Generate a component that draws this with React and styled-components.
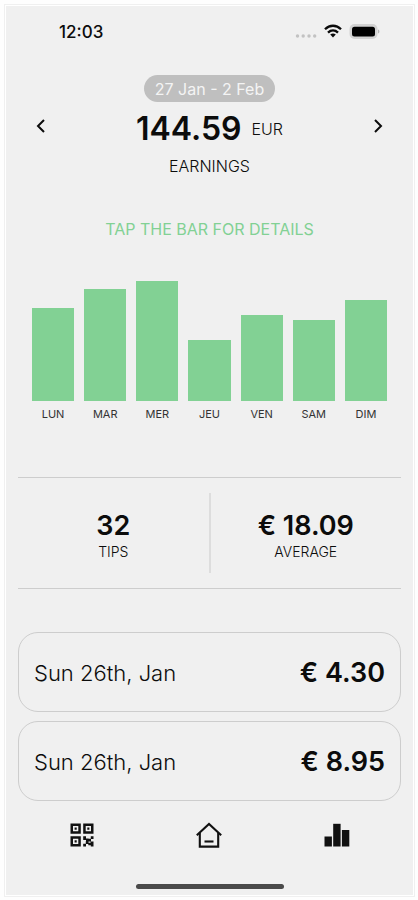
import { React, useState } from "react";
import styled, { createGlobalStyle } from "styled-components";

const days = [
    { name: "LUN", value: 93 },
    { name: "MAR", value: 112 },
    { name: "MER", value: 120 },
    { name: "JEU", value: 61 },
    { name: "VEN", value: 86 },
    { name: "SAM", value: 81 },
    { name: "DIM", value: 101 },
];

const tips = [
    { id: 1, date: "Sun 26th, Jan", value: "€ 4.30" },
    { id: 2, date: "Sun 26th, Jan", value: "€ 8.95" },
];

export default function App() {

    const [selected, setSelected] = useState(null);
    const max = Math.max(...days.map((d) => d.value));

    return (
        <>
            <GlobalStyle />
            <Frame>
                <Screen>
                    <StatusBar>
                        <time>12:03</time>
                        <StatusIcons />
                    </StatusBar>
                    <Header>
                        <ArrowButton aria-label="Previous week">
                            <svg width="24" height="24" viewBox="0 0 24 24"><path d="M15 5L9 11L15 17" /></svg>
                        </ArrowButton>
                        <Summary>
                            <Period>27 Jan - 2 Feb</Period>
                            <Total><strong>144.59</strong><span>EUR</span></Total>
                            <Caption>EARNINGS</Caption>
                        </Summary>
                        <ArrowButton aria-label="Next week">
                            <svg width="24" height="24" viewBox="0 0 24 24"><path d="M9 5L15 11L9 17" /></svg>
                        </ArrowButton>
                    </Header>
                    <Hint>TAP THE BAR FOR DETAILS</Hint>
                    <Chart>
                        {days.map((d) => (
                            <Day key={d.name} aria-pressed={selected === d.name} onClick={() => setSelected(d.name)}>
                                <Track><Bar style={{ height: `${(d.value / max) * 100}%` }} /></Track>
                                <span>{d.name}</span>
                            </Day>
                        ))}
                    </Chart>
                    <Stats>
                        <Stat>
                            <strong>32</strong>
                            <span>TIPS</span>
                        </Stat>
                        <Stat>
                            <strong>€ 18.09</strong>
                            <span>AVERAGE</span>
                        </Stat>
                    </Stats>
                    <Tips>
                        {tips.map((t) => (
                            <Tip key={t.id}>
                                <p>{t.date}</p>
                                <strong>{t.value}</strong>
                            </Tip>
                        ))}
                    </Tips>
                    <Nav>
                        <a href="#qr" aria-label="QR code"><QrIcon /></a>
                        <a href="#home" aria-label="Home"><HomeIcon /></a>
                        <a href="#stats" aria-label="Statistics"><StatsIcon /></a>
                    </Nav>
                    <HomeIndicator />
                </Screen>
            </Frame>
        </>
    )
}

function StatusIcons() {
    return (
        <svg width="85" height="18" viewBox="0 0 85 18">
            <g fill="#C2C2C2">
                <circle cx="2.5" cy="13" r="1.7" />
                <circle cx="8.2" cy="13" r="1.7" />
                <circle cx="14" cy="13" r="1.7" />
                <circle cx="19.7" cy="13" r="1.7" />
            </g>
            <g fill="none" stroke="#0A0A0A" strokeWidth="2.3">
                <path d="M30 6.2C34.6 1.6 41.4 1.6 46 6.2" />
                <path d="M33 9.6C36 6.7 40 6.7 43 9.6" />
            </g>
            <path d="M35.2 11.6C37 10.1 39 10.1 40.8 11.6L38 14.6Z" fill="#0A0A0A" />
            <rect x="54.5" y="1" width="28" height="15" rx="5" fill="#D2D2D2" />
            <rect x="57" y="3.8" width="23" height="9.6" rx="2.5" fill="#000000" />
            <path d="M83.2 6.5C84.8 7.1 84.8 9.9 83.2 10.5Z" fill="#A8A8A8" />
        </svg>
    )
}

function QrIcon() {
    return (
        <svg width="24" height="24" viewBox="0 0 24 24" fill="#111111">
            <path fillRule="evenodd" d="M0.5 0.5H10.8V10.8H0.5ZM3 3V8.3H8.3V3ZM4.6 4.6H6.7V6.7H4.6Z" />
            <path fillRule="evenodd" d="M13.2 0.5H23.5V10.8H13.2ZM15.7 3V8.3H21V3ZM17.3 4.6H19.4V6.7H17.3Z" />
            <path fillRule="evenodd" d="M0.5 13.2H10.8V23.5H0.5ZM3 15.7V21H8.3V15.7ZM4.6 17.3H6.7V19.4H4.6Z" />
            <path d="M13.2 13.2H16V15.5H18.6V18.3H16V17H13.2ZM20.8 13.2H23.5V16H20.8ZM18.3 15.7H21V18.4H18.3ZM15.8 18.2H18.5V20.9H15.8ZM13.2 20.8H16V23.5H13.2ZM20.6 18.4H23.5V23.5H20.8V22.2H18.3V19.8H20.6Z" />
        </svg>
    )
}

function HomeIcon() {
    return (
        <svg width="28" height="28" viewBox="0 0 28 28" fill="none" stroke="#111111" strokeWidth="2.1">
            <path d="M1.8 14.2L14 3L26.2 14.2" />
            <path d="M4.8 12V25.6H23.2V12" />
            <path d="M9.5 20.5H18.5" />
        </svg>
    )
}

function StatsIcon() {
    return (
        <svg width="26" height="24" viewBox="0 0 26 24" fill="#111111">
            <rect x="0.5" y="13.5" width="7.4" height="10" />
            <rect x="9.2" y="0.8" width="7.4" height="22.7" />
            <rect x="17.9" y="7" width="7.4" height="16.5" />
        </svg>
    )
}

const GlobalStyle = createGlobalStyle`
    *{
        box-sizing: border-box;
    }
    body{
        margin: 0;
        background: #FEFEFE;
        font-family: Inter, "Liberation Sans", sans-serif;
        color: #0C0C0C;
    }
    p{
        margin: 0;
    }
    button{
        border: none;
        background: none;
        padding: 0;
        font-family: inherit;
        color: inherit;
        cursor: pointer;
    }
`;
const Frame = styled.div`
    min-height: 100vh;
    padding: 4px 3px 3px 4px;
    display: flex;
`;
const Screen = styled.main`
    flex: 1;
    display: flex;
    flex-direction: column;
    padding: 0 12px 6px;
    background: #F0F0F0;
    border: 1px solid #FFFFFF;
    outline: 1px solid #F0F0F0;
    margin: 1px;
`;
const StatusBar = styled.div`
    height: 52px;
    padding: 0 21px 0 41px;
    display: flex;
    align-items: center;
    justify-content: space-between;
    font-size: 17px;
    line-height: 20px;
    font-weight: 500;
    svg{
        display: block;
    }
`;
const Header = styled.header`
    display: flex;
    align-items: center;
    justify-content: space-between;
    padding: 0 11px;
    margin-top: 17px;
`;
const ArrowButton = styled.button`
    width: 24px;
    height: 24px;
    svg{
        display: block;
        fill: none;
        stroke: #0C0C0C;
        stroke-width: 2;
    }
`;
const Summary = styled.div`
    display: flex;
    flex-direction: column;
    align-items: center;
`;
const Period = styled.p`
    padding: 1px 11px 0;
    border-radius: 14px;
    background: #BFBFBF;
    color: #F4F4F4;
    font-size: 16px;
    line-height: 26px;
`;
const Total = styled.p`
    display: flex;
    align-items: center;
    gap: 10px;
    margin-top: 4px;
    strong{
        font-size: 32px;
        line-height: 46px;
        font-weight: 600;
    }
    span{
        font-size: 16px;
        line-height: 20px;
        font-weight: 300;
    }
`;
const Caption = styled.p`
    margin-top: 2px;
    font-size: 16px;
    line-height: 24px;
    font-weight: 300;
`;
const Hint = styled.p`
    margin-top: 39px;
    font-size: 16px;
    line-height: 24px;
    text-align: center;
    color: #82D194;
`;
const Chart = styled.div`
    display: flex;
    gap: 10px;
    margin-top: 40px;
    padding: 0 14px;
`;
const Day = styled.button`
    flex: 1;
    span{
        display: block;
        margin-top: 5px;
        font-size: 11px;
        line-height: 16px;
        color: #333333;
    }
`;
const Track = styled.div`
    height: 120px;
    display: flex;
    align-items: flex-end;
`;
const Bar = styled.div`
    width: 100%;
    background: #82D194;
`;
const Stats = styled.section`
    display: flex;
    margin-top: 55px;
    padding: 15px 0;
    border-top: 1px solid #CDCDCD;
    border-bottom: 1px solid #CDCDCD;
`;
const Stat = styled.div`
    flex: 1;
    height: 80px;
    padding-top: 6px;
    display: flex;
    flex-direction: column;
    align-items: center;
    justify-content: center;
    & + &{
        border-left: 2px solid #DDDDDD;
    }
    strong{
        font-size: 27px;
        line-height: 32px;
        font-weight: 600;
    }
    span{
        font-size: 14px;
        line-height: 20px;
        font-weight: 300;
    }
`;
const Tips = styled.ul`
    list-style: none;
    margin: 43px 0 0;
    padding: 0;
    display: flex;
    flex-direction: column;
    gap: 9px;
`;
const Tip = styled.li`
    height: 80px;
    padding: 2px 15px 0 15px;
    border: 1px solid #CDCDCD;
    border-radius: 20px;
    display: flex;
    align-items: center;
    justify-content: space-between;
    p{
        font-size: 22px;
        line-height: 32px;
        font-weight: 300;
    }
    strong{
        font-size: 27px;
        line-height: 32px;
        font-weight: 600;
    }
`;
const Nav = styled.nav`
    display: grid;
    grid-template-columns: repeat(3, 1fr);
    justify-items: center;
    align-items: center;
    margin-top: 19px;
    height: 30px;
    a{
        display: flex;
    }
`;
const HomeIndicator = styled.div`
    width: 148px;
    height: 5px;
    margin: auto auto 0;
    border-radius: 3px;
    background: #4A4A4A;
`;
